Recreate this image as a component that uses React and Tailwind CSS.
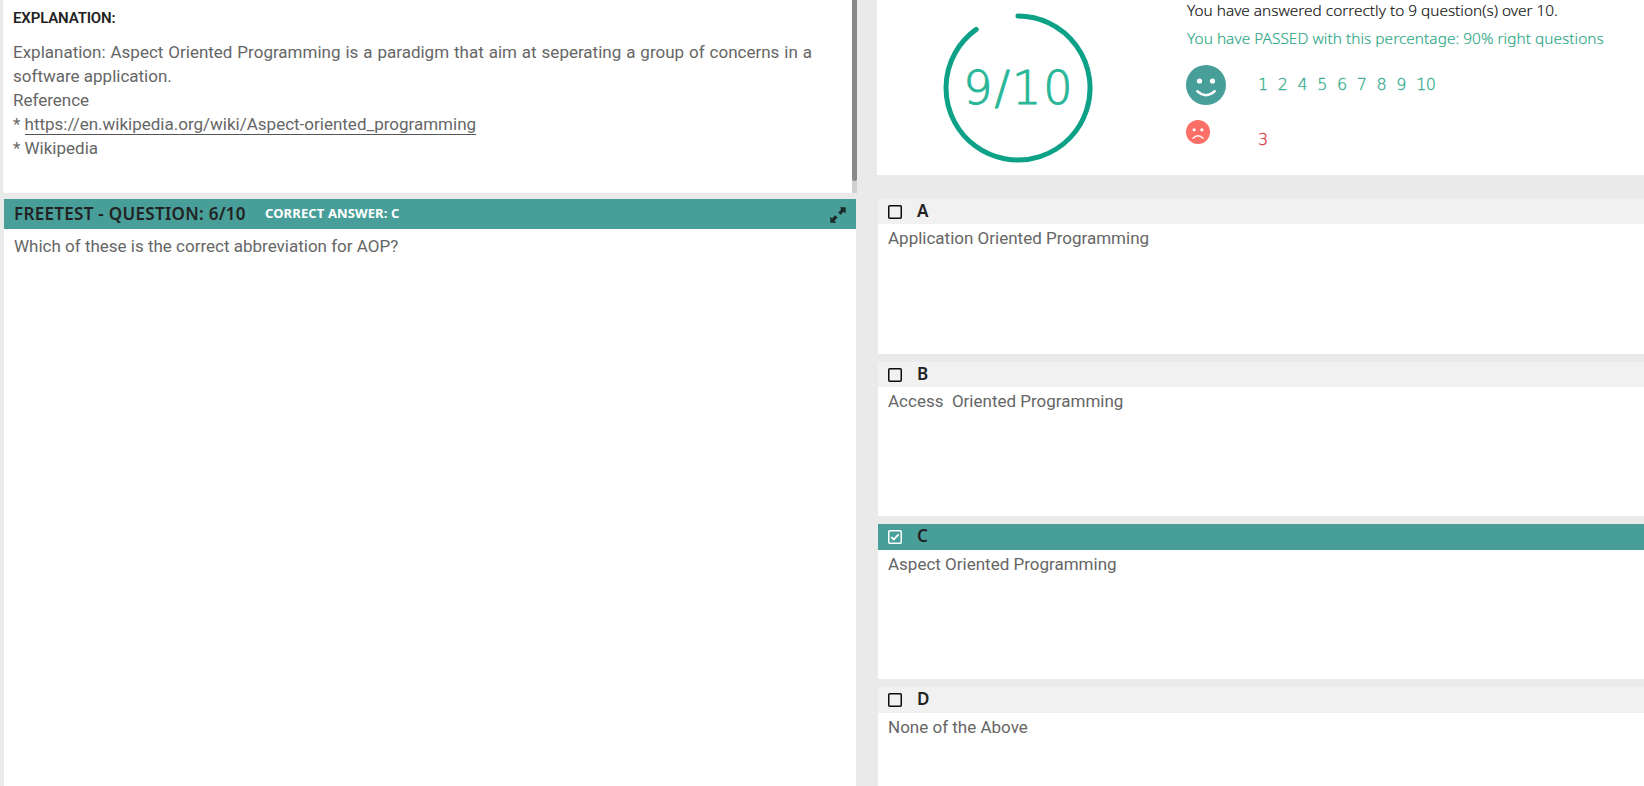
import React from "react";

const answers = [
  { id: "A", text: "Application Oriented Programming", header: "h-[25px]", box: "h-[155px]" },
  { id: "B", text: "Access  Oriented Programming", header: "h-[25px]", box: "h-[154px]" },
  { id: "C", text: "Aspect Oriented Programming", header: "h-[26px]", box: "h-[155px]", checked: true },
  { id: "D", text: "None of the Above", header: "h-[26px]", box: "h-[155px]" },
];

function Checkbox({ checked }) {
  return (
    <svg className={checked ? "size-3.5 text-white" : "size-3.5 text-[#0c0c0c]"} viewBox="0 0 14 14" fill="none" stroke="currentColor">
      <rect x="0.75" y="0.75" width="12.5" height="12.5" rx="1" strokeWidth="1.5" />
      {checked && <path d="M3.3 7 5.8 9.4 10.7 4.4" strokeWidth="1.8" />}
    </svg>
  );
}

function Answer({ answer }) {
  return (
    <section className={`${answer.box} shrink-0 bg-white`}>
      <div className={`${answer.header} ${answer.checked ? "bg-[#489f99]" : "bg-[#f1f1f1]"} flex items-center gap-[15px] pl-2.5`}>
        <Checkbox checked={answer.checked} />
        <span className="pb-0.5 font-['Noto_Sans',sans-serif] text-[17px] leading-6 font-semibold text-[#222]">{answer.id}</span>
      </div>
      <p className="pt-[2px] pl-2.5 text-[17px] leading-6 whitespace-pre text-[#666]">{answer.text}</p>
    </section>
  );
}

export default function App() {
  return (
    <div className="flex h-[786px] w-full overflow-hidden bg-[#eaeaea] font-[Roboto,sans-serif]">
      <div className="flex w-[857px] shrink-0 flex-col pl-[3px]">
        <section className="flex h-[193px] shrink-0 bg-white">
          <div className="w-[849px] pr-10 pl-2.5 text-[17px] leading-6 text-[#666]">
            <h2 className="pt-[6px] text-[15px] leading-6 font-semibold tracking-[-0.15px] text-[#222]">EXPLANATION:</h2>
            <p className="mt-[10px] text-justify">
              Explanation: Aspect Oriented Programming is a paradigm that aim at seperating a group of concerns in a software application.
            </p>
            <p>Reference</p>
            <p>* <a className="border-b border-[#555]">https://en.wikipedia.org/wiki/Aspect-oriented_programming</a></p>
            <p>* Wikipedia</p>
          </div>
          <div className="w-[5px] bg-[#d0d0d0]">
            <div className="h-[181px] rounded-b-sm bg-[#888]" />
          </div>
        </section>
        <section className="mt-1.5 mr-px ml-px grow bg-white">
          <div className="flex h-[30px] items-center bg-[#489f99] pr-2.5 pl-2.5 font-['Noto_Sans',sans-serif]">
            <h1 className="w-[251px] text-[17px] font-semibold tracking-[0.3px] whitespace-nowrap text-[#222]">FREETEST - QUESTION: 6/10</h1>
            <span className="grow text-[13px] font-bold tracking-[0.12px] whitespace-nowrap text-white">CORRECT ANSWER: C</span>
            <svg className="mt-px size-4 text-[#1c2b2a]" viewBox="0 0 16 16" fill="currentColor">
              <path d="M9.6.3h6.1v6.1l-1.9-1.7-3.2 3.1-2.4-2.4 3.1-3.2zM.3 9.6l1.7 1.8 3.2-3.2 2.4 2.4-3.2 3.2 2 1.9H.3z" />
            </svg>
          </div>
          <p className="pt-[5px] pl-2.5 text-[17px] leading-6 text-[#666]">Which of these is the correct abbreviation for AOP?</p>
        </section>
      </div>

      <div className="ml-5 flex grow flex-col">
        <section className="flex h-[175px] shrink-0 bg-white font-['Noto_Sans',sans-serif]">
          <div className="grid h-[175px] w-[310px] shrink-0 grid-cols-1 pl-[66px]">
            <svg className="mt-[13px] size-[150px]" viewBox="0 0 150 150">
              <path d="M75 3A72 72 0 1 1 33.2 16.4" fill="none" stroke="#0da187" strokeWidth="5" strokeLinecap="round" />
              <text x="75.8" y="91" textAnchor="middle" fontSize="46" letterSpacing="2" className="fill-[#29b799] stroke-[#29b799] stroke-[1] font-['DejaVu_Sans',sans-serif] font-extralight">9/10</text>
            </svg>
          </div>
          <div className="whitespace-nowrap">
            <p className="text-[15.4px] leading-[21px] font-light text-[#111] [-webkit-text-stroke:0.15px]">You have answered correctly to 9 question(s) over 10.</p>
            <p className="mt-[7px] text-[15.4px] leading-[21px] font-light tracking-[0.04px] text-[#2ba685] [-webkit-text-stroke:0.15px]">You have PASSED with this percentage: 90% right questions</p>
            <div className="mt-4 flex h-10 items-center">
              <svg className="-ml-px size-10" viewBox="0 0 40 40">
                <circle cx="20" cy="20" r="20" fill="#489f99" />
                <g fill="#fff"><circle cx="13.5" cy="16" r="2.6" /><circle cx="26.5" cy="16" r="2.6" /></g>
                <path d="M11.2 26.2Q20 34.2 28.8 26.2" fill="none" stroke="#fff" strokeWidth="2.4" strokeLinecap="round" />
              </svg>
              <span className="ml-8 font-['DejaVu_Sans',sans-serif] text-[16px] leading-5 font-extralight tracking-[-0.6px] [word-spacing:5.7px] text-[#38ad90] [-webkit-text-stroke:0.35px]">1 2 4 5 6 7 8 9 10</span>
            </div>
            <div className="mt-[15px] flex">
              <svg className="-ml-px size-6" viewBox="0 0 24 24">
                <circle cx="12" cy="12" r="12" fill="#fb6f66" />
                <g fill="#fff"><circle cx="8.1" cy="9.8" r="1.6" /><circle cx="15.9" cy="9.8" r="1.6" /></g>
                <path d="M7 18.2Q12 13.4 17 18.2" fill="none" stroke="#fff" strokeWidth="1.5" strokeLinecap="round" />
              </svg>
              <span className="mt-2.5 ml-12 font-['DejaVu_Sans',sans-serif] text-[16px] leading-5 font-extralight text-[#d83d49] [-webkit-text-stroke:0.35px]">3</span>
            </div>
          </div>
        </section>
        <div className="mt-6 ml-px flex flex-col gap-2">
          {answers.map((answer) => <Answer key={answer.id} answer={answer} />)}
        </div>
      </div>
    </div>
  );
}
